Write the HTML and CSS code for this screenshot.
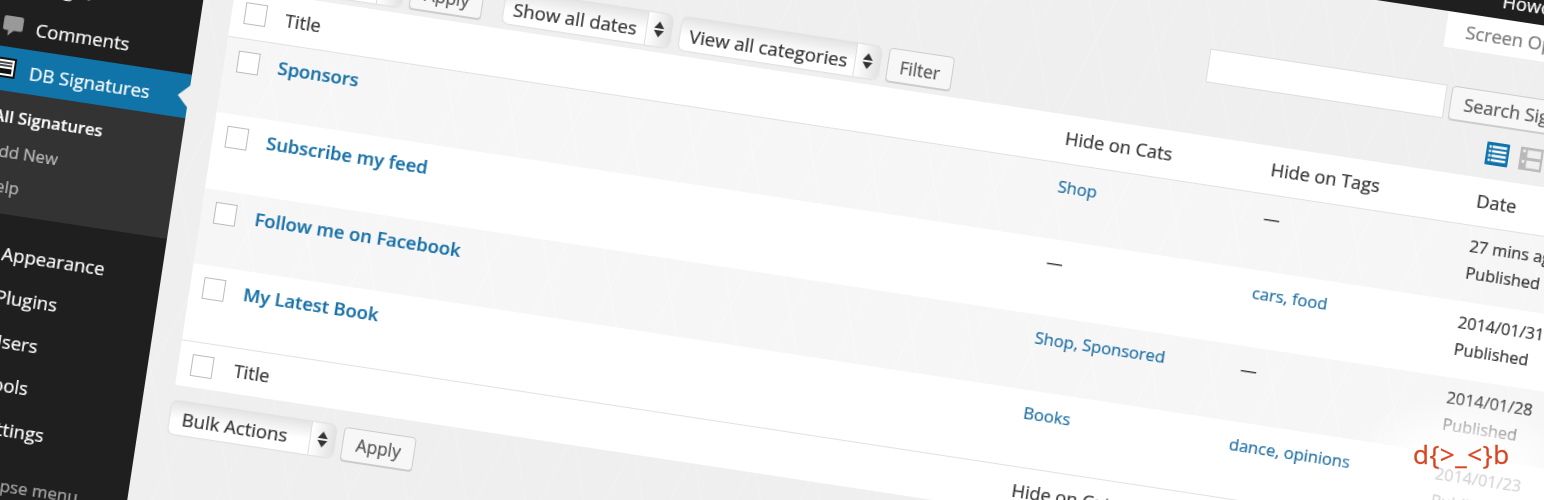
FILE: index.html
```html
<!DOCTYPE html>
<html lang="en">
<head>
    <meta charset="UTF-8">
    <title>DB Signatures</title>
    <link rel="stylesheet" href="styles.css">
</head>
<body>
    <div class="stage">
        <div class="adminbar"><span class="howdy">Howdy, admin</span></div>
        <div class="wrap">
            <aside class="sidebar">
                <div class="menu-item">Pages</div>
                <div class="menu-item">
                    <svg class="ico-bubble" viewBox="0 0 20 20"><path d="M3 1h14a2 2 0 0 1 2 2v9a2 2 0 0 1-2 2h-6l-5 5v-5H3a2 2 0 0 1-2-2V3a2 2 0 0 1 2-2z"/></svg>
                    Comments
                </div>
                <div class="menu-item current">
                    <svg class="ico-card" viewBox="0 0 24 20"><rect x="1" y="1" width="22" height="18" fill="#fff" stroke="#111" stroke-width="2"/><path d="M4 5h16M4 8h16" stroke="#111" stroke-width="1.6"/><rect x="4" y="11" width="16" height="5" fill="#111"/></svg>
                    DB Signatures
                </div>
                <div class="submenu">
                    <div class="sub-item active">All Signatures</div>
                    <div class="sub-item">Add New</div>
                    <div class="sub-item">Help</div>
                </div>
                <div class="menu-list">
                    <div class="menu-item">Appearance</div>
                    <div class="menu-item">Plugins</div>
                    <div class="menu-item">Users</div>
                    <div class="menu-item">Tools</div>
                    <div class="menu-item">Settings</div>
                    <div class="menu-item collapse">Collapse menu</div>
                </div>
            </aside>

            <main class="main">
                <div class="screen-tab">Screen Options</div>

                <div class="search-row">
                    <div class="search-input"></div>
                    <div class="btn search-btn">Search Signatures</div>
                </div>

                <div class="toolbar">
                    <div class="select bulk"><span>Bulk Actions</span><i class="arrows"></i></div>
                    <div class="btn apply">Apply</div>
                    <div class="select dates"><span>Show all dates</span><i class="arrows"></i></div>
                    <div class="select cats"><span>View all categories</span><i class="arrows"></i></div>
                    <div class="btn filter">Filter</div>
                    <svg class="view-ico" viewBox="0 0 22 22"><path fill="#0f72ab" d="M1 0h20a1 1 0 0 1 1 1v20a1 1 0 0 1-1 1H1a1 1 0 0 1-1-1V1a1 1 0 0 1 1-1z"/><path fill="#fff" d="M5.500 3h14v2.400h-14zM5.500 7.300h14v2.400h-14zM5.500 11.700h14v2.400h-14zM5.500 16h14v2.400h-14zM2.500 3h2v2.400h-2zM2.500 7.300h2v2.400h-2zM2.500 11.700h2v2.400h-2zM2.500 16h2v2.400h-2z"/></svg>
                    <svg class="view-ico" viewBox="0 0 22 22"><path fill="#b9b9b9" d="M0 0h22v22H0z"/><path fill="#efefef" d="M7 2.500h13v7H7zM7 12.500h13v7H7zM2.500 2.500h2.500v2.500H2.500zM2.500 12.500h2.500v2.500H2.500z"/></svg>
                </div>

                <div class="table">
                    <div class="row head">
                        <div class="cb-cell"><i class="cb"></i></div>
                        <div class="col-title">Title</div>
                        <div>Hide on Cats</div>
                        <div>Hide on Tags</div>
                        <div>Date</div>
                    </div>
                    <div class="row alt">
                        <div class="cb-cell"><i class="cb"></i></div>
                        <a class="title">Sponsors</a>
                        <a>Shop</a>
                        <div>—</div>
                        <div class="date">27 mins ago<br>Published</div>
                    </div>
                    <div class="row">
                        <div class="cb-cell"><i class="cb"></i></div>
                        <a class="title">Subscribe my feed</a>
                        <div>—</div>
                        <a>cars, food</a>
                        <div class="date">2014/01/31<br>Published</div>
                    </div>
                    <div class="row alt">
                        <div class="cb-cell"><i class="cb"></i></div>
                        <a class="title">Follow me on Facebook</a>
                        <a>Shop, Sponsored</a>
                        <div>—</div>
                        <div class="date">2014/01/28<br>Published</div>
                    </div>
                    <div class="row">
                        <div class="cb-cell"><i class="cb"></i></div>
                        <a class="title">My Latest Book</a>
                        <a>Books</a>
                        <a>dance, opinions</a>
                        <div class="date">2014/01/23<br>Published</div>
                    </div>
                    <div class="row foot">
                        <div class="cb-cell"><i class="cb"></i></div>
                        <div class="col-title">Title</div>
                        <div>Hide on Cats</div>
                        <div>Hide on Tags</div>
                        <div>Date</div>
                    </div>
                </div>

                <div class="toolbar bottom">
                    <div class="select bulk"><span>Bulk Actions</span><i class="arrows"></i></div>
                    <div class="btn apply">Apply</div>
                </div>
            </main>
        </div>
    </div>

    <div class="fade"></div>
    <div class="logo">d{&gt;_&lt;}b</div>
</body>
</html>
```

FILE: styles.css
```css
html, body {
    margin: 0;
    padding: 0;
    width: 1544px;
    height: 500px;
    overflow: hidden;
    background: #efefef;
}

body {
    position: relative;
    font-family: "Open Sans", "Liberation Sans", sans-serif;
    font-size: 18.300px;
    color: #333;
    -webkit-text-stroke: 0.2px currentColor;
}

.stage {
    width: 1640px;
    height: 760px;
    display: flex;
    flex-direction: column;
    transform-origin: 0 0;
    transform: rotate(8.65deg) translateY(-240px);
    filter: blur(0.35px);
}

.adminbar {
    height: 33px;
    flex: none;
    background: #1f1f1f;
    color: #fff;
    padding-left: 1486px;
    line-height: 29px;
}

.wrap {
    display: flex;
    flex: 1;
}

/* left menu */
.sidebar {
    width: 201px;
    flex: none;
    background: #1f1f1f;
    padding-top: 165px;
    color: #fff;
    font-size: 18.600px;
}

.menu-item {
    position: relative;
    height: 43.500px;
    line-height: 43.500px;
    padding-left: 40px;
}

.ico-bubble {
    position: absolute;
    left: 6px;
    top: 11px;
    width: 22px;
    height: 22px;
    fill: #999;
}

.ico-card {
    position: absolute;
    left: 2px;
    top: 11px;
    width: 24px;
    height: 20px;
}

.current {
    background: #1074a8;
    line-height: 46px;
}

.current::after {
    content: "";
    position: absolute;
    right: 0;
    top: 11px;
    border: 11px solid transparent;
    border-left: 0;
    border-right-color: #efefef;
}

.submenu {
    height: 122px;
    padding-top: 7px;
    box-sizing: border-box;
    background: #333;
}

.sub-item {
    height: 35px;
    line-height: 35px;
    padding-left: 11px;
    font-size: 16.700px;
    color: #bbb;
}

.sub-item.active {
    color: #fff;
    font-weight: 600;
}

.menu-list {
    padding-top: 17px;
}

.collapse {
    margin-top: 13px;
    margin-left: -6px;
    color: #aaa;
    font-size: 17px;
}

/* main area, the faint chevrons of the wp background */
.main {
    flex: 1;
    padding-left: 30px;
    min-width: 0;
    background:
        repeating-linear-gradient(72deg, rgba(255, 255, 255, 0.18) 0 1px, transparent 1px 58px),
        repeating-linear-gradient(108deg, rgba(255, 255, 255, 0.18) 0 1px, transparent 1px 58px),
        #efefef;
}

.screen-tab {
    width: 200px;
    height: 36px;
    margin-left: 1203px;
    padding-left: 20px;
    line-height: 36px;
    background: #fff;
    color: #777;
}

.search-row {
    display: flex;
    gap: 5px;
    margin-top: 37px;
    margin-left: 973px;
}

.search-input {
    width: 240px;
    height: 34px;
    box-sizing: border-box;
    background: #fff;
    border: 1px solid #ddd;
}

.btn {
    height: 34px;
    box-sizing: border-box;
    flex: none;
    display: flex;
    align-items: center;
    justify-content: center;
    background: #f7f7f7;
    border: 1px solid #ccc;
    border-radius: 4px;
    box-shadow: 0 1px 0 #ccc;
    color: #555;
    font-size: 17.300px;
}

.search-btn {
    width: 180px;
    justify-content: flex-start;
    padding-left: 13px;
    font-size: 18px;
}

.toolbar {
    display: flex;
    align-items: center;
    margin-top: 13px;
}

.select {
    height: 33px;
    box-sizing: border-box;
    flex: none;
    display: flex;
    align-items: center;
    justify-content: space-between;
    padding-left: 9px;
    background: linear-gradient(#e4e4e4, #fff 55%);
    border-radius: 6px;
    box-shadow: 0 0 2px #bbb;
    color: #333;
    font-size: 18.700px;
}

.select span {
    padding-top: 3px;
}

.arrows {
    position: relative;
    width: 25px;
    height: 100%;
    border-left: 1px solid #ddd;
    box-sizing: border-box;
    background: linear-gradient(90deg, #fff, #e2e2e2);
    border-radius: 0 6px 6px 0;
}

.arrows::before, .arrows::after {
    content: "";
    position: absolute;
    left: 7px;
    border: 5px solid transparent;
    border-top: 0;
    border-bottom: 7px solid #333;
}

.arrows::before {
    top: 8px;
}

.arrows::after {
    top: 17px;
    transform: scaleY(-1);
}

.bulk {
    width: 166px;
}

.apply {
    width: 73px;
    margin-left: 8px;
}

.dates {
    width: 168px;
    margin-left: 22px;
}

.cats {
    width: 201px;
    margin-left: 10px;
}

.filter {
    width: 66px;
    margin-left: 8px;
    padding-top: 2px;
}

.view-ico {
    width: 23px;
    height: 23px;
    flex: none;
    margin-left: 11px;
    margin-bottom: 6px;
}

.filter + .view-ico {
    margin-left: 539px;
}

.table {
    margin-top: 6px;
    width: 1500px;
    background: #fff;
}

.row {
    display: grid;
    grid-template-columns: 54px 789px 208px 208px 1fr;
    height: 76.500px;
    padding-top: 12px;
    box-sizing: border-box;
    line-height: 22px;
    font-size: 16.600px;
}

.alt {
    background:
        repeating-linear-gradient(72deg, rgba(255, 255, 255, 0.3) 0 1px, transparent 1px 58px),
        repeating-linear-gradient(108deg, rgba(255, 255, 255, 0.3) 0 1px, transparent 1px 58px),
        #f6f6f6;
}

.head, .foot {
    height: 48.500px;
    align-items: start;
    border-bottom: 1px solid #e1e1e1;
    font-size: 18.300px;
}

.foot {
    height: 46px;
    border-bottom: 0;
    border-top: 1px solid #e1e1e1;
}

.col-title {
    padding-top: 1px;
}

.foot .col-title {
    padding-left: 2px;
    margin-top: -2px;
}

.cb-cell {
    padding-left: 13px;
}

.cb {
    display: block;
    width: 20px;
    height: 20px;
    background: #fff;
    border: 1px solid #bbb;
}

.row a {
    color: #1f6fa3;
}

.row .title {
    color: #1a71a8;
    font-weight: 600;
    font-size: 18.450px;
}

.date {
    line-height: 27px;
    margin-top: -5.500px;
    font-size: 16.400px;
}

.toolbar.bottom {
    margin-top: 16px;
}

.bottom .select {
    padding-left: 12px;
}

.bottom .select span {
    padding-top: 0;
}

/* logo corner */
.fade {
    position: absolute;
    left: 1300px;
    top: 380px;
    width: 244px;
    height: 120px;
    background: radial-gradient(ellipse 125px 90px at 160px 100px, rgba(255, 255, 255, 0.78) 50%, rgba(255, 255, 255, 0) 100%);
}

.logo {
    position: absolute;
    left: 1413px;
    top: 436px;
    font-size: 26px;
    letter-spacing: 0.6px;
    -webkit-text-stroke: 0.3px currentColor;
    color: #d9431e;
}
```
